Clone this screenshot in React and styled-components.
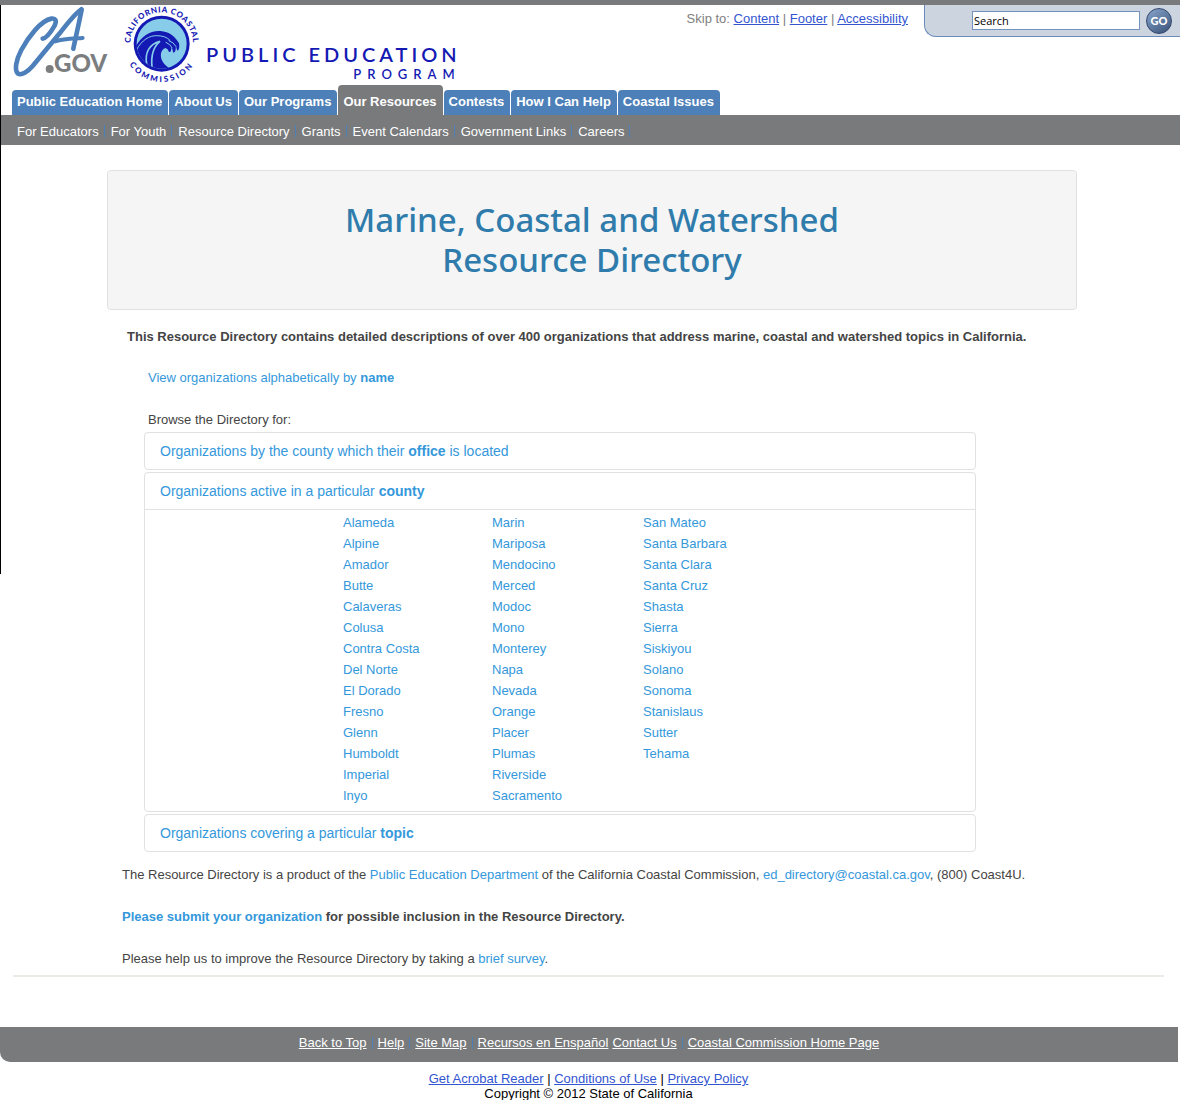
import React from "react";
import styled, { createGlobalStyle } from "styled-components";

const c = {
  grey: "#787a7c",
  tab: "#4d7fb8",
  link: "#3498db",
  text: "#444444",
  classic: "#3355d0",
  navy: "#1419b4",
  line: "#e1e1e1",
};

const GlobalStyle = createGlobalStyle`
  * { box-sizing: border-box; }
  body {
    margin: 0;
    background: #fff;
    color: ${c.text};
    font: 13px/21px "Liberation Sans", Arial, Helvetica, sans-serif;
  }
  p, h1, h2, ul { margin: 0; padding: 0; }
  ul { list-style: none; }
`;

const Page = styled.div`
  position: relative;
`;

const Edge = styled.div`
  position: absolute;
  left: 0;
  top: 5px;
  width: 1px;
  height: 569px;
  background: #000;
`;

const Header = styled.header`
  border-top: 5px solid ${c.grey};
`;

const HeaderTop = styled.div`
  display: flex;
  justify-content: space-between;
  align-items: flex-start;
  height: 80px;
`;

const Brand = styled.div`
  display: flex;
  align-items: flex-start;
  padding-left: 10px;
`;

const Emblem = styled.svg`
  overflow: visible;
`;

const Program = styled.div`
  display: flex;
  flex-direction: column;
  align-items: flex-end;
  padding-top: 37px;
  color: ${c.navy};
  font-family: Lato, "Open Sans", sans-serif;
  font-weight: 600;
`;

const ProgramName = styled.span`
  font-size: 20px;
  line-height: 24px;
  letter-spacing: 4px;
`;

const ProgramSub = styled.span`
  font-size: 13px;
  line-height: 16px;
  letter-spacing: 6px;
`;

const Tools = styled.div`
  display: flex;
  align-items: flex-start;
  gap: 16px;
`;

const Skip = styled.p`
  padding-top: 6px;
  line-height: 16px;
  color: #808080;
`;

const ClassicLink = styled.a`
  color: ${c.classic};
  text-decoration: underline;
`;

const SearchForm = styled.form`
  display: flex;
  align-items: center;
  gap: 6px;
  height: 32px;
  padding: 0 8px 0 47px;
  background: #ccd4e0;
  border: solid #6b8cba;
  border-width: 0 0 1px 1px;
  border-radius: 0 0 0 12px;
`;

const SearchInput = styled.input`
  width: 168px;
  height: 19px;
  padding: 0 1px;
  border: 1px solid #7392bd;
  background: #fff;
  color: #000;
  font: 11px/16px "Open Sans", "Noto Sans", sans-serif;
`;

const GoButton = styled.button`
  width: 26px;
  height: 26px;
  padding: 0;
  border: 1px solid #33476c;
  border-radius: 50%;
  background: linear-gradient(145deg, #8ba5cd, #5c789f 55%, #3b5075);
  color: #fff;
  font: 900 11px/24px Lato, sans-serif;
`;

const Tabs = styled.nav`
  display: flex;
  align-items: flex-end;
  gap: 1px;
  height: 30px;
  padding-left: 12px;
`;

const Tab = styled.a`
  height: ${(p) => (p.$active ? 30 : 25)}px;
  padding: ${(p) => (p.$active ? 5 : 0)}px 6px 0 5px;
  border-radius: 4px 4px 0 0;
  background: ${(p) => (p.$active ? c.grey : c.tab)};
  color: #fff;
  font-weight: bold;
  line-height: 24px;
  text-decoration: none;
`;

const SubNav = styled.nav`
  display: flex;
  align-items: center;
  height: 30px;
  padding: 2px 0 0 17px;
  background: ${c.grey};
`;

const SubLink = styled.a`
  display: flex;
  align-items: center;
  color: #fff;
  text-decoration: none;
  &::after {
    content: "";
    width: 1px;
    height: 12px;
    margin: 0 6px 0 5px;
    background: ${c.tab};
  }
`;

const Main = styled.main`
  margin: 0 16px 0 13px;
  padding: 25px 0 5px 7px;
  border-bottom: 2px solid #ebebe6;
`;

const Ruled = styled.div`
  max-width: 970px;
  margin: 0 auto;
`;

const Hero = styled.div`
  padding: 29px 20px;
  border: 1px solid ${c.line};
  border-radius: 4px;
  background: #f5f5f5;
  text-align: center;
`;

const Title = styled.h1`
  max-width: 600px;
  margin: 0 auto;
  color: #2f7cac;
  font: 500 33px/40px "Noto Sans", sans-serif;
`;

const Copy = styled.div`
  padding: 0 15px;
`;

const Intro = styled.p`
  padding: 16px 5px 0;
  font-weight: bold;
`;

const Lookup = styled.section`
  padding: 20px 86px 0 22px;
`;

const LookupLine = styled.p`
  padding: 0 4px;
  margin-bottom: ${(p) => (p.$last ? 2 : 21)}px;
`;

const Link = styled.a`
  color: ${c.link};
  text-decoration: none;
`;

const Panels = styled.div`
  display: flex;
  flex-direction: column;
  gap: 2px;
`;

const Panel = styled.section`
  border: 1px solid ${c.line};
  border-radius: 4px;
`;

const PanelTitle = styled.h2`
  padding: 8px 15px 7px;
  font-size: 14px;
  font-weight: normal;
  line-height: 21px;
`;

const PanelBody = styled.div`
  display: grid;
  grid-template-columns: 149px 151px 150px;
  justify-content: center;
  padding: 2px 0 5px 16px;
  border-top: 1px solid ${c.line};
`;

const Closing = styled.div`
  display: flex;
  flex-direction: column;
  gap: 21px;
  padding: 12px 0 1px;
`;

const Footer = styled.footer`
  padding-top: 50px;
`;

const FooterBar = styled.nav`
  display: flex;
  justify-content: center;
  gap: 4px;
  margin-right: 2px;
  padding: 5px 0 9px;
  border-radius: 0 0 0 10px;
  background: ${c.grey};
`;

const FooterLink = styled.a`
  color: #fff;
  text-decoration: underline;
`;

const FooterSep = styled.span`
  align-self: center;
  width: 1px;
  height: 12px;
  margin: 0 1px;
  background: ${c.tab};
`;

const Legal = styled.div`
  padding: 9px 3px 0 0;
  color: #000;
  line-height: 15px;
  text-align: center;
`;

const tabs = [
  "Public Education Home",
  "About Us",
  "Our Programs",
  "Our Resources",
  "Contests",
  "How I Can Help",
  "Coastal Issues",
];

const subLinks = [
  "For Educators",
  "For Youth",
  "Resource Directory",
  "Grants",
  "Event Calendars",
  "Government Links",
  "Careers",
];

const counties = [
  ["Alameda", "Alpine", "Amador", "Butte", "Calaveras", "Colusa", "Contra Costa", "Del Norte", "El Dorado", "Fresno", "Glenn", "Humboldt", "Imperial", "Inyo"],
  ["Marin", "Mariposa", "Mendocino", "Merced", "Modoc", "Mono", "Monterey", "Napa", "Nevada", "Orange", "Placer", "Plumas", "Riverside", "Sacramento"],
  ["San Mateo", "Santa Barbara", "Santa Clara", "Santa Cruz", "Shasta", "Sierra", "Siskiyou", "Solano", "Sonoma", "Stanislaus", "Sutter", "Tehama"],
];

function StateLogo() {
  return (
    <svg width="102" height="80" viewBox="0 3 306 240" role="img" aria-label="CA.gov">
      <g fill="none" stroke="#4d80ba" strokeLinecap="round" strokeLinejoin="round">
        <path
          strokeWidth="14"
          d="M98 104 C110 103 124 82 134 65 C141 49 136 42 124 44 C92 50 54 100 34 138 C18 168 13 198 23 208 C34 217 54 202 68 186 C96 152 122 121 149 88 C172 58 196 28 214 16"
        />
        <path strokeWidth="14" d="M215 17 C208 52 199 92 190 134" />
        <path strokeWidth="12" d="M136 112 C160 104 190 104 218 102" />
      </g>
      <circle cx="119" cy="195" r="12" fill="#7b7d7f" />
      <text x="132" y="205" fill="#7b7d7f" fontFamily="Lato, sans-serif" fontWeight="900" fontSize="72">
        GOV
      </text>
    </svg>
  );
}

function CommissionLogo() {
  return (
    <Emblem width="94" height="80" viewBox="6 15 282 240" role="img" aria-label="California Coastal Commission">
      <defs>
        <path id="ring-top" d="M65 158 A94 94 0 1 1 245 158" />
        <path id="ring-bottom" d="M40 131 A115 115 0 0 0 270 131" />
        <clipPath id="sea">
          <circle cx="155" cy="131" r="75" />
        </clipPath>
      </defs>
      <circle cx="155" cy="131" r="84" fill={c.navy} />
      <circle cx="155" cy="131" r="75" fill="#87cdea" />
      <g clipPath="url(#sea)">
        <path
          fill={c.navy}
          d="M76 142 C92 110 120 91 151 93 C178 95 195 108 207 130 C209 141 207 150 203 152 C199 150 201 144 197 139 C198 149 196 157 190 158 C187 153 190 147 184 143 C184 152 182 157 177 156 C174 148 170 145 166 144 C148 150 145 183 176 203 C186 208 205 206 222 188 L200 220 L100 220 Z"
        />
        <g fill="none" stroke="#87cdea" strokeWidth="3" strokeLinecap="round">
          <path d="M79 150 C97 118 118 107 140 107 C158 107 172 112 180 121" />
          <path strokeWidth="5" d="M110 192 C104 158 118 132 150 124 C135 136 122 160 126 201" />
          <path d="M177 122 Q191 127 198 139" />
          <path d="M168 127 Q181 132 186 143" />
        </g>
      </g>
      <g fill={c.navy} fontFamily="Lato, sans-serif" fontWeight="900" fontSize="24">
        <text letterSpacing="2">
          <textPath href="#ring-top" startOffset="50%" textAnchor="middle">CALIFORNIA COASTAL</textPath>
        </text>
        <text letterSpacing="7">
          <textPath href="#ring-bottom" startOffset="50%" textAnchor="middle">COMMISSION</textPath>
        </text>
      </g>
    </Emblem>
  );
}

export default function App() {
  return (
    <Page id="top">
      <GlobalStyle />
      <Header>
        <HeaderTop>
          <Brand>
            <StateLogo />
            <CommissionLogo />
            <Program>
              <ProgramName>PUBLIC EDUCATION</ProgramName>
              <ProgramSub>PROGRAM</ProgramSub>
            </Program>
          </Brand>
          <Tools>
            <Skip>
              Skip to: <ClassicLink href="#content">Content</ClassicLink> |{" "}
              <ClassicLink href="#footer">Footer</ClassicLink> |{" "}
              <ClassicLink href="#accessibility">Accessibility</ClassicLink>
            </Skip>
            <SearchForm role="search" onSubmit={(e) => e.preventDefault()}>
              <SearchInput type="text" aria-label="Search" defaultValue="Search" />
              <GoButton type="submit">GO</GoButton>
            </SearchForm>
          </Tools>
        </HeaderTop>
        <Tabs>
          {tabs.map((t) => (
            <Tab key={t} href="#top" $active={t === "Our Resources"}>
              {t}
            </Tab>
          ))}
        </Tabs>
        <SubNav>
          {subLinks.map((t) => (
            <SubLink key={t} href="#top">
              {t}
            </SubLink>
          ))}
        </SubNav>
      </Header>

      <Main id="content">
        <Ruled>
          <Hero>
            <Title>Marine, Coastal and Watershed Resource Directory</Title>
          </Hero>
          <Copy>
            <Intro>
              This Resource Directory contains detailed descriptions of over 400 organizations that address
              marine, coastal and watershed topics in California.
            </Intro>
            <Lookup>
              <LookupLine>
                <Link href="#name">
                  View organizations alphabetically by <b>name</b>
                </Link>
              </LookupLine>
              <LookupLine $last>Browse the Directory for:</LookupLine>
              <Panels>
                <Panel>
                  <PanelTitle>
                    <Link href="#office">
                      Organizations by the county which their <b>office</b> is located
                    </Link>
                  </PanelTitle>
                </Panel>
                <Panel>
                  <PanelTitle>
                    <Link href="#county">
                      Organizations active in a particular <b>county</b>
                    </Link>
                  </PanelTitle>
                  <PanelBody>
                    {counties.map((column) => (
                      <ul key={column[0]}>
                        {column.map((name) => (
                          <li key={name}>
                            <Link href="#county">{name}</Link>
                          </li>
                        ))}
                      </ul>
                    ))}
                  </PanelBody>
                </Panel>
                <Panel>
                  <PanelTitle>
                    <Link href="#topic">
                      Organizations covering a particular <b>topic</b>
                    </Link>
                  </PanelTitle>
                </Panel>
              </Panels>
            </Lookup>
            <Closing>
              <p>
                The Resource Directory is a product of the <Link href="#dept">Public Education Department</Link> of
                the California Coastal Commission,{" "}
                <Link href="mailto:ed_directory@coastal.ca.gov">ed_directory@coastal.ca.gov</Link>, (800) Coast4U.
              </p>
              <p>
                <b>
                  <Link href="#submit">Please submit your organization</Link> for possible inclusion in the Resource
                  Directory.
                </b>
              </p>
              <p>
                Please help us to improve the Resource Directory by taking a <Link href="#survey">brief survey</Link>.
              </p>
            </Closing>
          </Copy>
        </Ruled>
      </Main>

      <Footer id="footer">
        <FooterBar>
          <FooterLink href="#top">Back to Top</FooterLink>
          <FooterSep />
          <FooterLink href="#help">Help</FooterLink>
          <FooterSep />
          <FooterLink href="#map">Site Map</FooterLink>
          <FooterSep />
          <FooterLink href="#recursos">Recursos en Enspañol</FooterLink>
          <FooterLink href="#contact">Contact Us</FooterLink>
          <FooterSep />
          <FooterLink href="#home">Coastal Commission Home Page</FooterLink>
        </FooterBar>
        <Legal>
          <p>
            <ClassicLink href="#reader">Get Acrobat Reader</ClassicLink> |{" "}
            <ClassicLink href="#conditions">Conditions of Use</ClassicLink> |{" "}
            <ClassicLink href="#privacy">Privacy Policy</ClassicLink>
          </p>
          <p>Copyright © 2012 State of California</p>
        </Legal>
      </Footer>
      <Edge />
    </Page>
  );
}
